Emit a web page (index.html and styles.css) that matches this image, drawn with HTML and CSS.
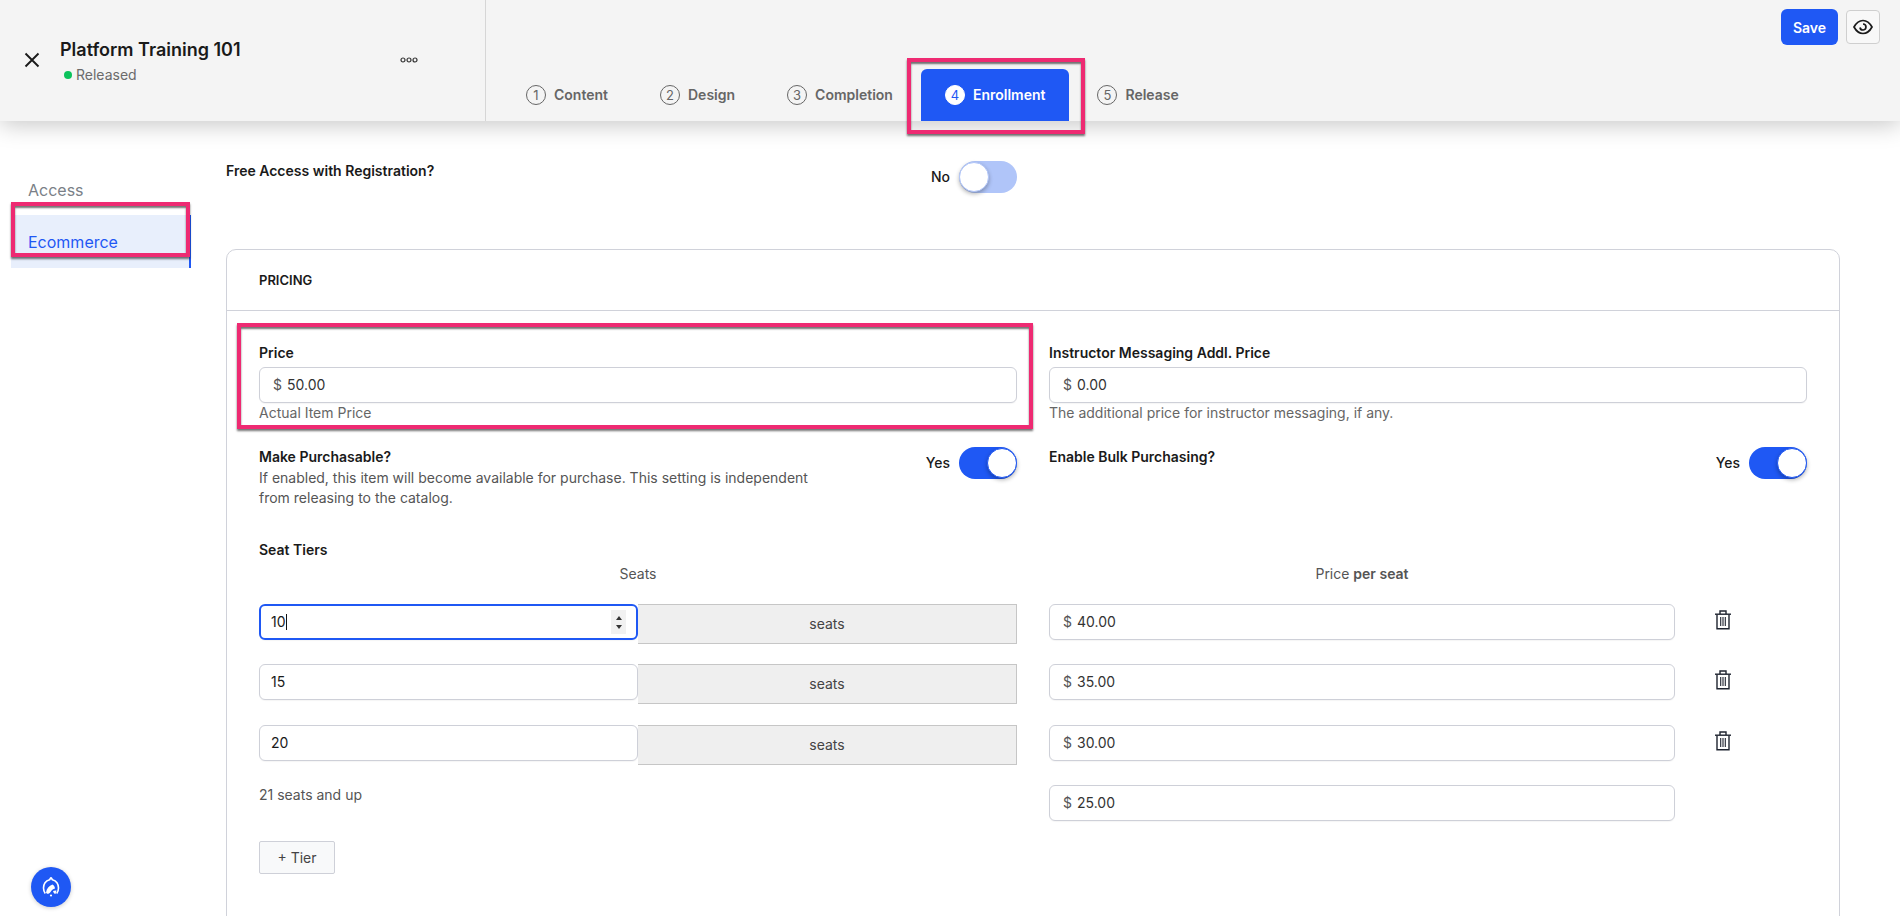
FILE: index.html
```html
<!DOCTYPE html>
<html lang="en">
<head>
<meta charset="utf-8">
<title>Platform Training 101</title>
<link rel="stylesheet" href="styles.css">
</head>
<body>
<header class="topbar">
  <div class="course">
    <button class="close" aria-label="Close">
      <svg width="16" height="16" viewBox="0 0 16 16"><path d="M1.5 1.5l13 13M14.500 1.500l-13 13" stroke="#1a1a1a" stroke-width="1.900" fill="none"/></svg>
    </button>
    <div class="course-info">
      <div class="course-title">Platform Training 101</div>
      <div class="course-status"><span class="dot"></span>Released</div>
    </div>
    <svg class="more" width="18" height="6" viewBox="0 0 18 6"><g fill="none" stroke="#333" stroke-width="1.200"><circle cx="3" cy="3" r="2"/><circle cx="9" cy="3" r="2"/><circle cx="15" cy="3" r="2"/></g></svg>
  </div>
  <div class="topbar-right">
    <div class="actions">
      <button class="save">Save</button>
      <button class="preview" aria-label="Preview">
        <svg width="20" height="16" viewBox="0 0 20 16"><path d="M1 8c2.200-4 5.200-6.500 9-6.500S16.800 4 19 8c-2.200 4-5.200 6.500-9 6.500S3.200 12 1 8z" fill="none" stroke="#1a1a1a" stroke-width="1.700"/><path d="M7 8.500a3 3 0 1 0 3-3.500" fill="none" stroke="#1a1a1a" stroke-width="1.700"/></svg>
      </button>
    </div>
    <nav class="tabs">
      <a class="tab"><span class="num">1</span>Content</a>
      <a class="tab"><span class="num">2</span>Design</a>
      <a class="tab"><span class="num">3</span>Completion</a>
      <a class="tab active"><span class="num">4</span>Enrollment</a>
      <a class="tab"><span class="num">5</span>Release</a>
    </nav>
  </div>
</header>

<div class="page">
  <aside class="sidenav">
    <a class="side-item">Access</a>
    <a class="side-item current">Ecommerce</a>
    <div class="launcher">
      <svg width="22" height="22" viewBox="0 0 22 22"><path d="M11 1.500l1.400 2.200C16 4.800 18.500 8 18.500 12c0 2.200-.8 4-1.800 5.500" fill="none" stroke="#fff" stroke-width="1.600"/><path d="M11 1.500L9.600 3.700C6 4.800 3.500 8 3.500 12c0 2.200.8 4 1.800 5.500" fill="none" stroke="#fff" stroke-width="1.600"/><path d="M6 16.500c.5-4 3-6.500 6.500-8 1.500 1 2.500 2.500 2.500 4-2 .5-3.500 1.500-4.500 3.500-.7 1.300-2 2-3.500 1.800z" fill="#fff"/><path d="M13 15c1-.6 2.500-.7 3.500-.5L15.500 18c-1 0-2-1.200-2.500-3z" fill="#fff"/><circle cx="11" cy="19.500" r="1.100" fill="#fff"/></svg>
    </div>
  </aside>

  <main class="content">
    <div class="free-row">
      <div class="label">Free Access with Registration?</div>
      <div class="switch-wrap"><span class="switch-text">No</span><span class="switch off"><span class="knob"></span></span></div>
    </div>

    <section class="card">
      <h2 class="card-head">PRICING</h2>
      <div class="card-body">
        <div class="two-col">
          <div class="field">
            <div class="label">Price</div>
            <div class="input"><span class="prefix">$</span>50.00</div>
            <div class="help">Actual Item Price</div>
          </div>
          <div class="field">
            <div class="label">Instructor Messaging Addl. Price</div>
            <div class="input"><span class="prefix">$</span>0.00</div>
            <div class="help">The additional price for instructor messaging, if any.</div>
          </div>
        </div>

        <div class="two-col toggles">
          <div class="toggle-row">
            <div>
              <div class="label">Make Purchasable?</div>
              <div class="desc">If enabled, this item will become available for purchase. This setting is independent from releasing to the catalog.</div>
            </div>
            <div class="switch-wrap"><span class="switch-text">Yes</span><span class="switch on"><span class="knob"></span></span></div>
          </div>
          <div class="toggle-row">
            <div class="label">Enable Bulk Purchasing?</div>
            <div class="switch-wrap"><span class="switch-text">Yes</span><span class="switch on"><span class="knob"></span></span></div>
          </div>
        </div>

        <div class="label tiers-title">Seat Tiers</div>
        <div class="two-col tier-heads">
          <div class="tier-head">Seats</div>
          <div class="tier-head price-head">Price <b>per seat</b></div>
        </div>

        <div class="tier-rows">
          <div class="two-col tier">
            <div class="seat-group">
              <div class="input seat focused">10<span class="caret"></span>
                <span class="spinner"><i class="up"></i><i class="down"></i></span>
              </div>
              <div class="addon">seats</div>
            </div>
            <div class="price-group">
              <div class="input price"><span class="prefix">$</span>40.00</div>
              <svg class="trash" width="16" height="20" viewBox="0 0 16 20"><g fill="none" stroke="#1f2430" stroke-width="1.400"><path d="M0 4.200h16"/><path d="M5 4V1h6v3"/><path d="M2 4.500v14.300h12V4.500"/><path d="M5.700 7v9M8 7v9M10.300 7v9" stroke-width="1.100"/></g></svg>
            </div>
          </div>
          <div class="two-col tier">
            <div class="seat-group">
              <div class="input seat">15</div>
              <div class="addon">seats</div>
            </div>
            <div class="price-group">
              <div class="input price"><span class="prefix">$</span>35.00</div>
              <svg class="trash" width="16" height="20" viewBox="0 0 16 20"><g fill="none" stroke="#1f2430" stroke-width="1.400"><path d="M0 4.200h16"/><path d="M5 4V1h6v3"/><path d="M2 4.500v14.300h12V4.500"/><path d="M5.700 7v9M8 7v9M10.300 7v9" stroke-width="1.100"/></g></svg>
            </div>
          </div>
          <div class="two-col tier">
            <div class="seat-group">
              <div class="input seat">20</div>
              <div class="addon">seats</div>
            </div>
            <div class="price-group">
              <div class="input price"><span class="prefix">$</span>30.00</div>
              <svg class="trash" width="16" height="20" viewBox="0 0 16 20"><g fill="none" stroke="#1f2430" stroke-width="1.400"><path d="M0 4.200h16"/><path d="M5 4V1h6v3"/><path d="M2 4.500v14.300h12V4.500"/><path d="M5.700 7v9M8 7v9M10.300 7v9" stroke-width="1.100"/></g></svg>
            </div>
          </div>
          <div class="two-col tier last">
            <div class="tier-note">21 seats and up</div>
            <div class="price-group">
              <div class="input price"><span class="prefix">$</span>25.00</div>
            </div>
          </div>
        </div>
        <button class="add-tier">+ Tier</button>
      </div>
    </section>
  </main>
</div>

<div class="mark mark-tab"></div>
<div class="mark mark-side"></div>
<div class="mark mark-price"></div>
</body>
</html>
```

FILE: styles.css
```css
* { box-sizing: border-box; }
html, body { margin: 0; height: 100%; }
body {
  height: 916px;
  overflow: hidden;
  position: relative;
  background: #fff;
  font-family: Inter, "Liberation Sans", sans-serif;
  font-size: 14px;
  line-height: 20px;
  color: #1a1a1a;
}
button { font-family: inherit; }

/* Top bar */
.topbar {
  height: 121px;
  display: flex;
  background: #f4f4f4;
  box-shadow: 0 4px 22px rgba(0, 0, 0, 0.22);
  position: relative;
  z-index: 2;
}
.course {
  width: 486px;
  flex: none;
  border-right: 1px solid #d6d6d6;
  display: flex;
  align-items: flex-start;
  padding: 39px 0 0 24px;
}
.close {
  width: 16px;
  height: 16px;
  margin-top: 13px;
  padding: 0;
  border: 0;
  background: none;
  display: block;
}
.close svg { display: block; }
.course-info { margin-left: 20px; width: 340px; }
.course-title { font-size: 18px; line-height: 22px; font-weight: 600; color: #1a1a1a; }
.course-status {
  margin-top: 4px;
  padding-left: 4px;
  display: flex;
  align-items: center;
  font-size: 14px;
  line-height: 20px;
  color: #6b6b6b;
}
.dot { width: 8px; height: 8px; border-radius: 50%; background: #0cc25c; margin-right: 4px; }
.more { margin-top: 18px; margin-left: 0; }

.topbar-right { flex: 1; display: flex; flex-direction: column; padding-left: 16px; }
.actions { display: flex; justify-content: flex-end; align-items: center; gap: 8px; padding: 9px 20px 0 0; }
.save {
  width: 57px;
  height: 36px;
  border: 0;
  border-radius: 6px;
  background: #1f58f4;
  color: #fff;
  font-size: 14px;
  font-weight: 600;
  padding: 0;
}
.preview {
  width: 34px;
  height: 34px;
  padding: 0;
  border: 1px solid #cfcfcf;
  border-radius: 4px;
  background: #f8f8f8;
  display: flex;
  align-items: center;
  justify-content: center;
}
.tabs { margin-top: auto; display: flex; gap: 4px; }
.tab {
  height: 52px;
  padding: 0 24px;
  display: flex;
  align-items: center;
  gap: 8px;
  border-radius: 6px 6px 0 0;
  font-weight: 600;
  font-size: 14px;
  color: #666;
}
.num {
  width: 20px;
  height: 20px;
  border-radius: 50%;
  border: 1.500px solid #666;
  display: flex;
  align-items: center;
  justify-content: center;
  font-size: 13px;
  font-weight: 400;
  line-height: 1;
}
.tab.active { background: #1f58f4; color: #fff; }
.tab.active .num { background: #fff; border-color: #fff; color: #1f58f4; }

/* Page */
.page { display: flex; height: 795px; }
.sidenav { width: 226px; flex: none; padding: 44px 0 0 11px; position: relative; }
.side-item {
  display: flex;
  align-items: center;
  width: 180px;
  padding-left: 17px;
  font-size: 16px;
  height: 49px;
  color: #7a7f87;
}
.side-item.current {
  margin-top: 1px;
  height: 53px;
  background: #e8effc;
  border-right: 2px solid #1f58f4;
  color: #1f58f4;
}
.launcher {
  position: absolute;
  left: 31px;
  top: 746px;
  width: 40px;
  height: 40px;
  border-radius: 50%;
  background: #1f58f4;
  box-shadow: 0 1px 4px rgba(0, 0, 0, 0.2);
  display: flex;
  align-items: center;
  justify-content: center;
}
.content { flex: none; width: 1614px; padding-top: 40px; }

.label { font-weight: 600; font-size: 14px; line-height: 20px; color: #1a1a1a; }
.free-row { display: flex; justify-content: space-between; width: 791px; height: 88px; }
.switch-wrap { display: flex; align-items: center; gap: 9px; height: 32px; font-weight: 500; font-size: 14px; }
.free-row .switch-wrap { margin-top: 0; }
.switch-text { color: #1a1a1a; }
.switch { width: 58px; height: 32px; border-radius: 16px; display: block; position: relative; }
.switch.on { background: #1f58f4; }
.switch.off { background: #b0c5f9; }
.knob {
  position: absolute;
  top: 1px;
  width: 30px;
  height: 30px;
  border-radius: 50%;
  background: #fff;
  border: 1px solid #1f58f4;
  box-shadow: 0 2px 4px rgba(0, 0, 0, 0.3);
}
.on .knob { right: 0; }
.off .knob { left: 0; border-color: #b0c5f9; }

.card {
  width: 1614px;
  height: 800px;
  border: 1px solid #d0d2da;
  border-radius: 10px;
  background: #fff;
}
.card-head {
  margin: 0;
  height: 61px;
  padding: 20px 0 0 32px;
  border-bottom: 1px solid #d0d2da;
  font-size: 13px;
  line-height: 20px;
  font-weight: 600;
  color: #1a1a1a;
}
.card-body { padding: 32px 31px 0 32px; }
.two-col { display: grid; grid-template-columns: 758px 758px; column-gap: 32px; }
.input {
  height: 36px;
  border: 1px solid #ced0d8;
  border-radius: 6px;
  background: #fff;
  padding: 0 13px;
  display: flex;
  align-items: center;
  color: #333;
  font-size: 14px;
  box-shadow: 0 1px 1px rgba(0, 0, 0, 0.04);
}
.field .label { margin-bottom: 4px; }
.prefix { color: #555; margin-right: 5px; }
.help { color: #666; font-size: 14px; line-height: 20px; }
.toggles { margin-top: 24px; }
.toggle-row { display: flex; justify-content: space-between; align-items: flex-start; }
.desc { margin-top: 1px; max-width: 570px; color: #555; line-height: 20px; }
.tiers-title { margin-top: 32px; }
.tier-heads { margin-top: 4px; height: 20px; color: #555; }
.tier-head { text-align: center; }
.price-head { width: 626px; }
.price-head b { font-weight: 600; }
.tier-rows { margin-top: 20px; display: flex; flex-direction: column; gap: 20.330px; }
.tier { height: 40px; }
.tier.last { height: 36px; }
.seat-group { display: flex; align-items: flex-start; }
.seat { width: 379px; padding: 0 11px; color: #1a1a1a; position: relative; }
.seat.focused { border: 2px solid #1f58f4; padding: 0 10px; }
.caret { display: inline-block; width: 1px; height: 16px; background: #111; margin-left: 0; }
.spinner {
  position: absolute;
  right: 10px;
  top: 4px;
  width: 15px;
  height: 24px;
  background: #f1f1f1;
  display: flex;
  flex-direction: column;
  align-items: center;
  justify-content: space-around;
  padding: 3px 0;
}
.spinner i { width: 0; height: 0; border-left: 3.500px solid transparent; border-right: 3.500px solid transparent; }
.spinner .up { border-bottom: 4px solid #333; }
.spinner .down { border-top: 4px solid #333; }
.addon {
  width: 379px;
  height: 40px;
  background: #efefef;
  border: 1px solid #c6c6c6;
  border-left: 0;
  display: flex;
  align-items: center;
  justify-content: center;
  color: #444;
}
.price-group { display: flex; align-items: flex-start; }
.price { width: 626px; }
.trash { margin: 6px 0 0 40px; flex: none; }
.tier-note { color: #555; line-height: 20px; }
.add-tier {
  display: block;
  margin-top: 20px;
  width: 76px;
  height: 33px;
  padding: 0;
  border: 1px solid #ced0d8;
  border-radius: 2px;
  background: #f8f9fa;
  color: #444;
  font-size: 14px;
}

/* Review annotations drawn over the page */
.mark {
  position: absolute;
  z-index: 5;
  border: 4px solid #ee2a72;
  box-shadow: 0 2px 2px rgba(0, 0, 0, 0.55), inset 0 2px 2px rgba(0, 0, 0, 0.55);
  pointer-events: none;
}
.mark-tab { left: 907px; top: 58px; width: 178px; height: 76px; }
.mark-side { left: 11px; top: 202px; width: 179px; height: 55px; }
.mark-price { left: 237px; top: 323px; width: 796px; height: 106px; }
```
